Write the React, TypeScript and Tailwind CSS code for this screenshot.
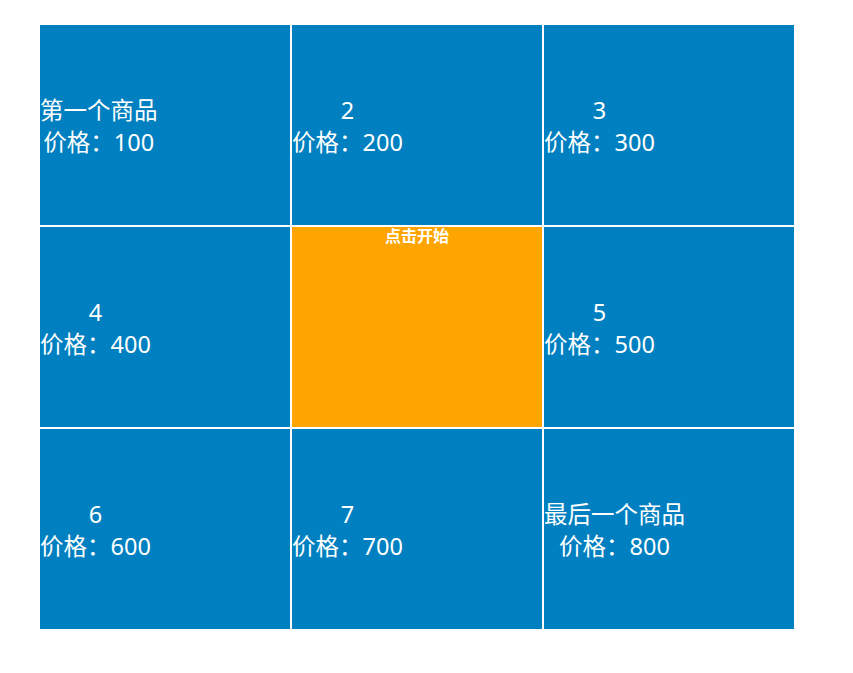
import React from 'react';

const items = [
  { name: '第一个商品', price: 100 },
  { name: '2', price: 200 },
  { name: '3', price: 300 },
  { name: '4', price: 400 },
  null,
  { name: '5', price: 500 },
  { name: '6', price: 600 },
  { name: '7', price: 700 },
  { name: '最后一个商品', price: 800 },
];

export default function App() {
  return (
    <div
      className="min-h-screen bg-white pt-[25px] pl-[40px]"
      style={{ fontFamily: '"Noto Sans", "Noto Sans CJK SC", sans-serif' }}
    >
      <div className="grid w-[754px] grid-cols-[250px_250px_250px] grid-rows-[200px_200px_200px] gap-[2px] bg-white">
        {items.map((item, i) =>
          item ? (
            <div key={i} className="flex items-center bg-[#0080c0] text-white">
              <div className="pt-[2px] text-center text-[23.5px] leading-[32px]">
                <div>{item.name}</div>
                <div>价格：{item.price}</div>
              </div>
            </div>
          ) : (
            <div key={i} className="flex justify-center bg-[#ffa500]">
              <button className="mt-[1px] h-fit text-[16px] font-bold leading-[17px] text-white">
                点击开始
              </button>
            </div>
          )
        )}
      </div>
    </div>
  );
}
